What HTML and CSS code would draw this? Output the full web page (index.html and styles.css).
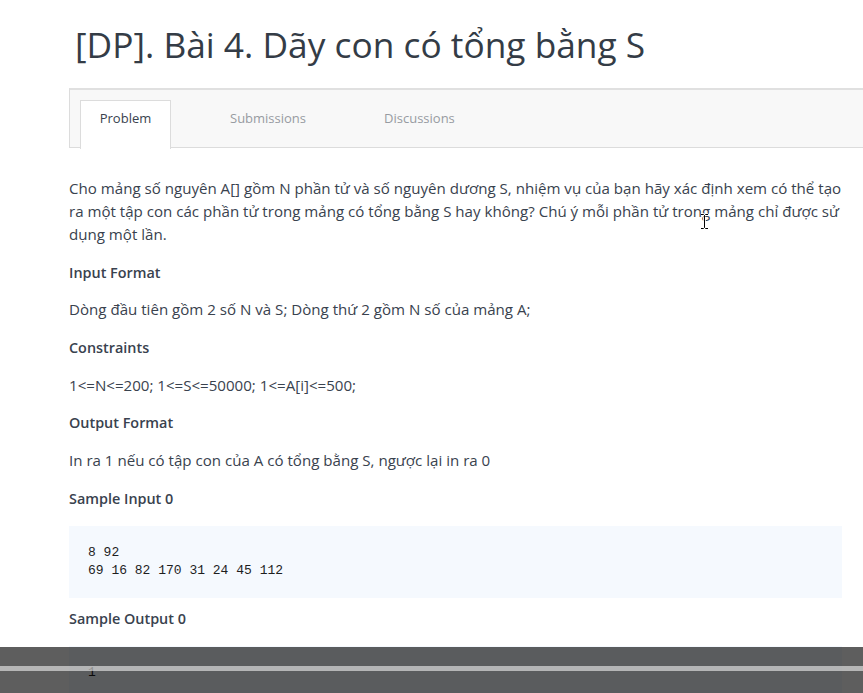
FILE: index.html
```html
<!DOCTYPE html>
<html lang="vi">
<head>
<meta charset="utf-8">
<title>[DP]. Bài 4. Dãy con có tổng bằng S</title>
<link rel="stylesheet" href="styles.css">
</head>
<body>
<div class="page">
  <h1 class="title">[DP]. Bài 4. Dãy con có tổng bằng S</h1>
  <div class="tabs">
    <div class="tab active">Problem</div>
    <div class="tab">Submissions</div>
    <div class="tab">Discussions</div>
  </div>
  <div class="content">
    <p class="text">Cho mảng số nguyên A[] gồm N phần tử và số nguyên dương S, nhiệm vụ của bạn hãy xác định xem có thể tạo ra một tập con các phần tử trong mảng có tổng bằng S hay không? Chú ý mỗi phần tử trong mảng chỉ được sử dụng một lần.</p>
    <h3 class="heading">Input Format</h3>
    <p class="text">Dòng đầu tiên gồm 2 số N và S; Dòng thứ 2 gồm N số của mảng A;</p>
    <h3 class="heading">Constraints</h3>
    <p class="text">1&lt;=N&lt;=200; 1&lt;=S&lt;=50000; 1&lt;=A[i]&lt;=500;</p>
    <h3 class="heading">Output Format</h3>
    <p class="text">In ra 1 nếu có tập con của A có tổng bằng S, ngược lại in ra 0</p>
    <h3 class="heading">Sample Input 0</h3>
    <pre class="code">8 92
69 16 82 170 31 24 45 112</pre>
    <h3 class="heading">Sample Output 0</h3>
    <pre class="code">1</pre>
  </div>
</div>
<svg class="cursor" width="9" height="17" viewBox="0 0 9 17" aria-hidden="true">
  <path d="M1 1.5h2.5l1 1 1-1H8M4.5 2.5v12M1 15.5h2.5l1-1 1 1H8" fill="none" stroke="#fff" stroke-width="2.6"/>
  <path d="M1 1.5h2.5l1 1 1-1H8M4.5 2.5v12M1 15.5h2.5l1-1 1 1H8" fill="none" stroke="#000" stroke-width="1"/>
</svg>
<div class="player-bar">
  <div class="player-track"></div>
</div>
</body>
</html>
```

FILE: styles.css
```css
html, body {
  margin: 0;
  padding: 0;
  background: #fff;
  overflow: hidden;
}

body {
  font-family: "Open Sans", "Noto Sans", sans-serif;
  color: #39424e;
  width: 863px;
  height: 693px;
  position: relative;
}

.page {
  padding-left: 69px;
  width: 773px;
}

.title {
  margin: 0;
  padding: 22px 0 0 6px;
  font-size: 35.3px;
  line-height: 44px;
  font-weight: 400;
  color: #343c46;
  height: 66px;
}

.tabs {
  display: flex;
  gap: 40px;
  margin-right: -120px;
  background: #f8f8f8;
  border: 1px solid #dcdcdc;
  border-top-width: 2px;
  border-top-color: #e0e0e0;
  padding: 10px 0 0 10px;
  height: 47px;
  box-sizing: content-box;
}

.tab {
  height: 40px;
  margin-bottom: -1px;
  padding: 7px 18px 0;
  font-size: 13px;
  line-height: 20px;
  color: #979ba1;
  border: 1px solid transparent;
  border-bottom: 0;
}

.tab.active {
  background: #fff;
  color: #39424e;
  border-color: #dcdcdc;
  height: 41px;
  width: 53px;
  text-align: center;
}

.content {
  padding-top: 29px;
}

.text {
  margin: 0 0 14.7px;
  font-size: 15.1px;
  line-height: 23px;
}

.heading {
  margin: 0 0 14.7px;
  font-size: 14.4px;
  line-height: 23px;
  font-weight: 600;
}

.code {
  margin: 16px 0 9px;
  background: #f5f9fe;
  padding: 18px 19px;
  font-family: "Liberation Mono", "DejaVu Sans Mono", monospace;
  font-size: 13px;
  line-height: 18px;
  color: #1e1e1e;
}

.cursor {
  position: absolute;
  left: 700px;
  top: 213px;
}

.player-bar {
  position: absolute;
  left: 0;
  right: 0;
  top: 647px;
  height: 46px;
  background: rgba(0, 0, 0, 0.63);
  display: flex;
  flex-direction: column;
  justify-content: flex-start;
}

.player-track {
  margin-top: 19px;
  height: 5px;
  background: rgba(255, 255, 255, 0.55);
}
```
